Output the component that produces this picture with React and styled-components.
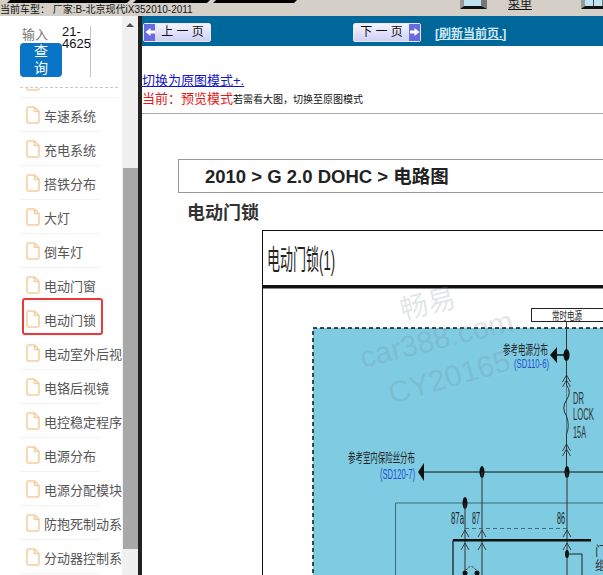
import React from "react";
import styled, { createGlobalStyle } from "styled-components";

const FONT = `"Liberation Sans", "Noto Sans CJK SC", sans-serif`;

const menuItems = [
  "车速系统", "充电系统", "搭铁分布", "大灯", "倒车灯", "电动门窗", "电动门锁",
  "电动室外后视", "电铬后视镜", "电控稳定程序", "电源分布", "电源分配模块",
  "防抱死制动系", "分动器控制系",
];

function FileIcon() {
  return (
    <FileSvg width="14" height="18" viewBox="0 0 14 18" fill="none" stroke="#f6cd9f" strokeWidth="1.5" strokeLinejoin="round">
      <path d="M2.5 1H8.5L13 5.5V15.5Q13 17 11.5 17H2.5Q1 17 1 15.5V2.5Q1 1 2.5 1Z" />
      <path d="M8.5 1V5.5H13" />
    </FileSvg>
  );
}

function PageButton({ next, children }) {
  const arrow = (
    <ArrowBox>
      <svg width="10" height="10" viewBox="0 0 10 10">
        <path d={next ? "M0 3.5H4.5V1L9.5 5L4.5 9V6.5H0Z" : "M10 3.5H5.5V1L0.5 5L5.5 9V6.5H10Z"} fill="#fff" />
      </svg>
    </ArrowBox>
  );
  return (
    <NavButton>
      {!next && arrow}
      <NavLabel>{children}</NavLabel>
      {next && arrow}
    </NavButton>
  );
}

function Chevron({ x, y }) {
  return <path d={`M${x - 4} ${y + 7}L${x} ${y}L${x + 4} ${y + 7}`} fill="none" stroke="#333" strokeWidth="0.9" />;
}

// coordinates are relative to the top left corner of the wiring picture
function WiringDiagram() {
  return (
    <svg width="341" height="345" viewBox="0 0 341 345" fontFamily={FONT}>
      <rect x="0.5" y="0.5" width="345" height="350" fill="#fff" stroke="#111" />
      <rect y="55" width="341" height="3.5" fill="#111" />
      <text x="5" y="40" fontSize="28" fill="#222" textLength="68" lengthAdjust="spacingAndGlyphs">电动门锁(1)</text>

      <rect x="269.5" y="78.5" width="80" height="13" fill="#fff" stroke="#222" />
      <text x="290" y="89.5" fontSize="11" fill="#222" textLength="30" lengthAdjust="spacingAndGlyphs">常时电源</text>

      <rect x="51" y="98" width="300" height="260" fill="#7ecbe2" stroke="#111" strokeWidth="1.5" strokeDasharray="4 3" />

      <path d="M304.5 91V242" stroke="#333" strokeWidth="1" fill="none" />
      <ellipse cx="304.5" cy="125" rx="3" ry="6" fill="#111" />
      <path d="M295 125H304" stroke="#111" strokeWidth="1.5" />
      <path d="M288 125L295 117V133Z" fill="#111" />
      <text x="241" y="124" fontSize="13" fill="#222" textLength="45" lengthAdjust="spacingAndGlyphs">参考电源分布</text>
      <text x="252" y="138" fontSize="13" fill="#1f4fd0" textLength="35" lengthAdjust="spacingAndGlyphs">(SD110-6)</text>
      <Chevron x={304.5} y={145} />
      <Chevron x={304.5} y={150} />

      <path d="M304.5 155Q310 162 304.5 170Q299 178 304.5 186Q308 196 304.5 204" fill="#7ecbe2" stroke="#333" />
      <text x="311" y="174" fontSize="16" fill="#333" textLength="11" lengthAdjust="spacingAndGlyphs">DR</text>
      <text x="311" y="190" fontSize="16" fill="#333" textLength="21" lengthAdjust="spacingAndGlyphs">LOCK</text>
      <text x="311" y="208" fontSize="16" fill="#333" textLength="13" lengthAdjust="spacingAndGlyphs">15A</text>
      <Chevron x={304.5} y={214} />
      <Chevron x={304.5} y={219} />

      <path d="M162 242H341" stroke="#111" strokeWidth="1" />
      <path d="M156 242L162 233V251Z" fill="#111" />
      <ellipse cx="220" cy="242" rx="2.5" ry="6" fill="#111" />
      <ellipse cx="305" cy="242" rx="2.5" ry="6" fill="#111" />
      <text x="86" y="232" fontSize="13" fill="#222" textLength="67" lengthAdjust="spacingAndGlyphs">参考室内保险丝分布</text>
      <text x="118" y="249" fontSize="14" fill="#1f4fd0" textLength="35" lengthAdjust="spacingAndGlyphs">(SD120-7)</text>

      <path d="M133.5 345V273H341" stroke="#3f6a78" strokeWidth="1" fill="none" />
      <ellipse cx="203" cy="273" rx="2.5" ry="6" fill="#111" />
      <path d="M203 273V345M220 242V345M305 242V345" stroke="#333" strokeWidth="1" fill="none" />
      <text x="189" y="294" fontSize="16" fill="#222" textLength="13" lengthAdjust="spacingAndGlyphs">87a</text>
      <text x="210" y="294" fontSize="16" fill="#222" textLength="8" lengthAdjust="spacingAndGlyphs">87</text>
      <text x="295" y="294" fontSize="16" fill="#222" textLength="8" lengthAdjust="spacingAndGlyphs">86</text>
      <path d="M203 298.5H305" stroke="#3f6a78" strokeWidth="1" strokeDasharray="4 3" />
      <Chevron x={203} y={300} />
      <Chevron x={220} y={300} />
      <Chevron x={305} y={300} />
      <path d="M191 345V310.5" stroke="#111" strokeWidth="1.2" fill="none" />
      <rect x="191" y="309" width="138" height="2.5" fill="#111" />
      <Chevron x={203} y={313} />
      <Chevron x={220} y={313} />
      <Chevron x={305} y={313} />
      <ellipse cx="305" cy="324" rx="2" ry="4" fill="#111" />
      <path d="M305 324H320V345" stroke="#222" fill="none" />
      <circle cx="203" cy="343" r="2.5" fill="#111" />
      <circle cx="215" cy="343" r="2.5" fill="#111" />
      <path d="M204 340Q209 333 214 340" stroke="#333" strokeDasharray="2 1.5" fill="none" />
      <text x="333" y="325" fontSize="13" fill="#333">门</text>
      <text x="333" y="340" fontSize="13" fill="#333">继</text>

      <g fill="#7d8a90" fillOpacity="0.22">
        <text x="141" y="90" fontSize="28" transform="rotate(-14 141 90)">畅易</text>
        <text x="101" y="138" fontSize="30" transform="rotate(-14 101 138)">car388.com</text>
        <text x="130" y="174" fontSize="30" transform="rotate(-16 130 174)">CY20165</text>
      </g>
    </svg>
  );
}

export default function App() {
  return (
    <Page>
      <GlobalStyle />
      <TopBar>
        <CarInfo>
          <Strips>
            <Strip $w={123} />
            <Strip $w={77} />
            <Strip $w={84} />
          </Strips>
          <CarText>当前车型： 厂家:B-北京现代iX352010-2011</CarText>
        </CarInfo>
        <TopTools>
          <WindowIcon />
          <MenuLink>菜单</MenuLink>
          <WindowIcon $split />
        </TopTools>
      </TopBar>
      <Main>
        <Sidebar>
          <SideContent>
            <SearchRow>
              <SearchLeft>
                <SearchLabel>输入</SearchLabel>
                <SearchButton>查询</SearchButton>
              </SearchLeft>
              <SearchValue>21-4625</SearchValue>
            </SearchRow>
            <CutRow>
              <CutIcon><FileIcon /></CutIcon>
            </CutRow>
            <MenuList>
              {menuItems.map((name) => (
                <MenuItem key={name} $selected={name === "电动门锁"}>
                  <FileIcon />
                  <MenuText>{name}</MenuText>
                </MenuItem>
              ))}
            </MenuList>
          </SideContent>
          <ScrollTrack>
            <ScrollArrow />
            <ScrollThumb />
          </ScrollTrack>
        </Sidebar>
        <Content>
          <NavBar>
            <PageButton>上 一 页</PageButton>
            <PageButton next>下 一 页</PageButton>
            <RefreshLink>[刷新当前页.]</RefreshLink>
          </NavBar>
          <ModeBlock>
            <ModeLink>切换为原图模式+.</ModeLink>
            <ModeLine>
              <ModeCurrent>当前：预览模式</ModeCurrent>
              <ModeHint>若需看大图，切换至原图模式</ModeHint>
            </ModeLine>
          </ModeBlock>
          <Rule />
          <PathBox>2010 &gt; G 2.0 DOHC &gt; 电路图</PathBox>
          <SectionTitle>电动门锁</SectionTitle>
          <DiagramWrap>
            <WiringDiagram />
          </DiagramWrap>
        </Content>
      </Main>
    </Page>
  );
}

const GlobalStyle = createGlobalStyle`
  html, body {
    margin: 0;
    padding: 0;
    background: #fff;
    font-family: ${FONT};
  }
`;

const Page = styled.div`
  width: 603px;
  height: 575px;
  overflow: hidden;
  display: flex;
  flex-direction: column;
`;

const TopBar = styled.div`
  height: 16px;
  flex: none;
  display: flex;
  background: #d4d0c8;
  overflow: hidden;
`;

const CarInfo = styled.div`
  width: 460px;
  flex: none;
`;

const Strips = styled.div`
  display: flex;
  gap: 3px;
  padding-left: 7px;
  height: 3px;
`;

const Strip = styled.div`
  width: ${({ $w }) => $w}px;
  background: #000;
  clip-path: polygon(0 100%, 3px 0, 100% 0, calc(100% - 3px) 100%);
`;

const CarText = styled.div`
  font-size: 10px;
  line-height: 13px;
  color: #111;
  white-space: nowrap;
`;

const TopTools = styled.div`
  display: flex;
  align-items: flex-start;
`;

const WindowIcon = styled.div`
  width: 27px;
  height: 9px;
  box-sizing: border-box;
  background: ${({ $split }) =>
    $split
      ? "linear-gradient(90deg, #bfe3f2 0 46%, #444 46% 54%, #bfe3f2 54%)"
      : "#bfe3f2"};
  border-style: solid;
  border-width: 0 6px 3px 4px;
  border-color: #777 #777 #111 #999;
`;

const MenuLink = styled.a`
  width: 24px;
  margin: -2px 49px 0 21px;
  font-size: 12px;
  line-height: 13px;
  height: 13px;
  color: #111;
  text-decoration: underline;
  white-space: nowrap;
`;

const Main = styled.div`
  flex: 1;
  min-height: 0;
  display: flex;
`;

const Sidebar = styled.div`
  width: 138px;
  flex: none;
  display: flex;
  border-right: 4px solid #222;
  box-shadow: inset -1px 0 0 #888;
`;

const SideContent = styled.div`
  width: 122px;
  flex: none;
  overflow: hidden;
  background: #fff;
`;

const SearchRow = styled.div`
  display: flex;
  height: 71px;
  padding: 10px 0 0 20px;
  box-sizing: border-box;
`;

const SearchLeft = styled.div`
  width: 42px;
  flex: none;
  display: flex;
  flex-direction: column;
`;

const SearchLabel = styled.div`
  height: 17px;
  padding-left: 2px;
  font-size: 13px;
  line-height: 17px;
  color: #777;
`;

const SearchButton = styled.button`
  width: 42px;
  height: 34px;
  padding: 0 12px;
  border: none;
  border-radius: 4px;
  background: #0a74c6;
  color: #fff;
  font-family: ${FONT};
  font-size: 14px;
  line-height: 17px;
`;

const SearchValue = styled.div`
  width: 28px;
  height: 51px;
  flex: none;
  border-right: 1px solid #c4c4c4;
  font-size: 13px;
  line-height: 12px;
  color: #111;
  white-space: pre-line;
`;

const CutRow = styled.div`
  height: 11px;
  box-sizing: border-box;
  margin: 0 4px 0 20px;
  border-top: 1px dashed #ccc;
  border-bottom: 1px solid #f2f2f2;
  overflow: hidden;
`;

const CutIcon = styled.div`
  margin: -15px 0 0 6px;
`;

const MenuList = styled.div`
  display: flex;
  flex-direction: column;
`;

const FileSvg = styled.svg`
  flex: none;
`;

const MenuItem = styled.div`
  position: relative;
  height: 34px;
  box-sizing: border-box;
  flex: none;
  display: flex;
  align-items: center;
  gap: 4px;
  padding-left: 26px;
  white-space: nowrap;
  background: linear-gradient(#f3f3f3, #f3f3f3) 20px 100% / 80px 1px no-repeat;

  ${({ $selected }) =>
    $selected &&
    `
    &::after {
      content: "";
      position: absolute;
      left: 22px;
      top: -4px;
      width: 81px;
      height: 37px;
      box-sizing: border-box;
      border: 2.5px solid #e8393f;
      border-radius: 3px;
    }
  `}
`;

const MenuText = styled.span`
  font-size: 13px;
  color: #555;
`;

const ScrollTrack = styled.div`
  width: 16px;
  flex: none;
  background: #f0f0f0;
  display: flex;
  flex-direction: column;
  align-items: center;
`;

const ScrollArrow = styled.div`
  margin-top: 7px;
  width: 0;
  height: 0;
  border-left: 4px solid transparent;
  border-right: 4px solid transparent;
  border-bottom: 4px solid #505050;
`;

const ScrollThumb = styled.div`
  margin-top: 141px;
  width: 15px;
  height: 381px;
  background: #a8a8a8;
`;

const Content = styled.div`
  flex: 1;
  min-width: 0;
  overflow: hidden;
  background: #fff;
`;

const NavBar = styled.div`
  height: 30px;
  display: flex;
  align-items: center;
  padding: 2px 0 0 1px;
  box-sizing: border-box;
  background: #00679a;
`;

const NavButton = styled.div`
  width: 68px;
  height: 19px;
  box-sizing: border-box;
  display: flex;
  align-items: stretch;
  border: 1px solid #e8e8ff;
  border-radius: 2px;
  background: linear-gradient(#f4f4ff, #cfcff5);
  margin-right: 142px;

  & + & {
    margin-right: 14px;
  }
`;

const ArrowBox = styled.div`
  width: 11px;
  flex: none;
  display: flex;
  align-items: center;
  justify-content: center;
  background: #6a6ae0;
`;

const NavLabel = styled.div`
  flex: 1;
  text-align: center;
  font-size: 12px;
  line-height: 16px;
  color: #111;
  white-space: nowrap;
`;

const RefreshLink = styled.a`
  font-size: 12px;
  font-weight: bold;
  color: #cfeaf6;
  text-decoration: underline;
  white-space: nowrap;
`;

const ModeBlock = styled.div`
  padding-top: 26px;
  height: 67px;
  box-sizing: border-box;
`;

const ModeLink = styled.a`
  display: block;
  font-size: 13px;
  line-height: 18px;
  color: #1414c8;
  text-decoration: underline;
`;

const ModeLine = styled.div`
  display: flex;
  align-items: baseline;
  line-height: 18px;
  white-space: nowrap;
`;

const ModeCurrent = styled.span`
  font-size: 13px;
  color: #e01818;
`;

const ModeHint = styled.span`
  font-size: 10px;
  color: #111;
`;

const Rule = styled.div`
  height: 1px;
  background: #aaa;
`;

const PathBox = styled.div`
  margin: 45px 0 0 36px;
  height: 34px;
  box-sizing: border-box;
  border: 1px solid #999;
  border-right: none;
  padding-left: 26px;
  font-size: 18.5px;
  font-weight: bold;
  line-height: 33px;
  color: #222;
  white-space: nowrap;
`;

const SectionTitle = styled.div`
  margin: 9px 0 0 45px;
  height: 28px;
  font-size: 18px;
  font-weight: bold;
  line-height: 22px;
  color: #333;
`;

const DiagramWrap = styled.div`
  margin-left: 120px;
  line-height: 0;
`;
